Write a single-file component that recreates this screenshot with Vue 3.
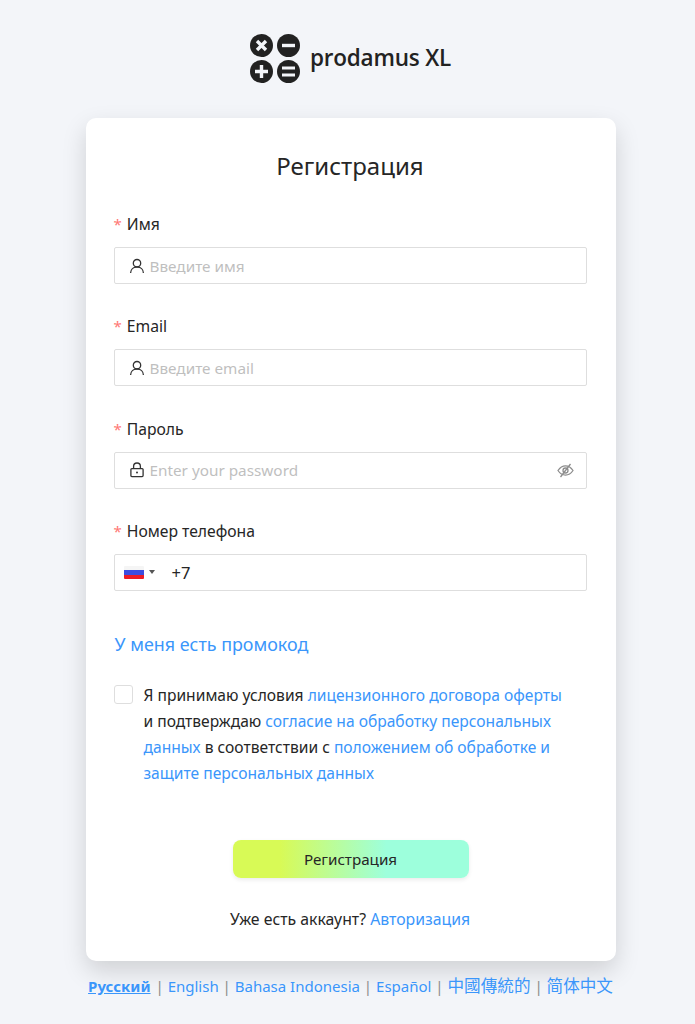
<template>
  <div class="page">
    <div class="logo">
      <svg class="logo-mark" width="50" height="50" viewBox="0 0 50 50">
        <circle cx="11.5" cy="12.500" r="11.5" fill="#222" />
        <circle cx="38.5" cy="12.500" r="11.5" fill="#222" />
        <circle cx="11.5" cy="38.5" r="11.5" fill="#222" />
        <circle cx="38.5" cy="38.5" r="11.5" fill="#222" />
        <path d="M7 8l9 9M16 8l-9 9" stroke="#f3f5f9" stroke-width="3.4" />
        <path d="M32 12.500h13" stroke="#f3f5f9" stroke-width="3.4" />
        <path d="M5 38.5h13M11.5 32v13" stroke="#f3f5f9" stroke-width="3.4" />
        <path d="M32 35h13M32 42h13" stroke="#f3f5f9" stroke-width="3.2" />
      </svg>
      <span class="logo-text">prodamus XL</span>
    </div>

    <div class="card">
      <h1>Регистрация</h1>

      <div v-for="field in fields" :key="field.label" class="field">
        <label><span class="req">*</span>{{ field.label }}</label>
        <div class="input">
          <svg v-if="field.icon === 'user'" class="prefix" width="16" height="16" viewBox="0 0 16 16" fill="none" stroke="#333" stroke-width="1.3">
            <circle cx="8" cy="5.2" r="3.7" />
            <path d="M1.6 15c0-3.6 2.8-6 6.4-6s6.4 2.4 6.4 6" />
          </svg>
          <svg v-else class="prefix" width="16" height="16" viewBox="0 0 16 16" fill="none" stroke="#333" stroke-width="1.3">
            <rect x="1.9" y="6.6" width="12.2" height="8" rx="1" />
            <path d="M4.6 6.6V4.4a3.4 3.4 0 0 1 6.8 0v2.2" />
            <circle cx="8" cy="10.6" r="1" fill="#333" stroke="none" />
          </svg>
          <span class="placeholder">{{ field.placeholder }}</span>
          <svg v-if="field.icon === 'lock'" class="eye" width="17" height="17" viewBox="0 0 17 17" fill="none" stroke="#8c8c8c" stroke-width="1.3">
            <path d="M1 8.5c2-3 4.4-4.6 7.5-4.6S14 5.500 16 8.500c-2 3-4.400 4.600-7.500 4.600S3 11.500 1 8.500z" />
            <circle cx="8.500" cy="8.500" r="2.500" />
            <path d="M13.500 2L3.500 15" />
          </svg>
        </div>
      </div>

      <div class="field phone-field">
        <label><span class="req">*</span>Номер телефона</label>
        <div class="input phone">
          <span class="flag"></span>
          <span class="caret"></span>
          <span class="phone-value">+7</span>
        </div>
      </div>

      <a class="promo">У меня есть промокод</a>

      <div class="agree">
        <span class="checkbox"></span>
        <p>
          Я принимаю условия <a>лицензионного договора оферты</a> и подтверждаю
          <a>согласие на обработку персональных данных</a> в соответствии с
          <a>положением об обработке и защите персональных данных</a>
        </p>
      </div>

      <button class="submit">Регистрация</button>

      <div class="login">Уже есть аккаунт? <a>Авторизация</a></div>
    </div>

    <div class="langs">
      <template v-for="(lang, i) in langs" :key="lang.name">
        <span v-if="i > 0" class="sep"> | </span>
        <a :class="{ active: i === 0, cjk: lang.cjk }">{{ lang.name }}</a>
      </template>
    </div>
  </div>
</template>

<script setup>
const fields = [
  { label: 'Имя', placeholder: 'Введите имя', icon: 'user' },
  { label: 'Email', placeholder: 'Введите email', icon: 'user' },
  { label: 'Пароль', placeholder: 'Enter your password', icon: 'lock' }
]

const langs = [
  { name: 'Русский' },
  { name: 'English' },
  { name: 'Bahasa Indonesia' },
  { name: 'Español' },
  { name: '中國傳統的', cjk: true },
  { name: '简体中文', cjk: true }
]
</script>

<style>
html,
body {
  margin: 0;
  background: #f3f5f9;
}
</style>

<style scoped>
.page {
  display: flex;
  flex-direction: column;
  align-items: center;
  height: 1024px;
  overflow: hidden;
  padding-top: 33px;
  padding-left: 6px;
  box-sizing: border-box;
  background: #f3f5f9;
  font-family: "Noto Sans", "Noto Sans CJK SC", sans-serif;
  color: #262626;
}

.logo {
  display: flex;
  align-items: center;
  gap: 10px;
  height: 50px;
  margin-bottom: 35px;
}

.logo-text {
  font-family: "Open Sans", sans-serif;
  font-size: 22.500px;
  font-weight: 600;
  color: #222;
  letter-spacing: -0.2px;
  margin-top: -2px;
}

.card {
  width: 530px;
  height: 843px;
  box-sizing: border-box;
  padding: 28px 29px 0 28px;
  background: #fff;
  border-radius: 10px;
  box-shadow: 0 10px 24px rgba(0, 0, 0, 0.15);
}

h1 {
  margin: 0 0 27px;
  height: 40px;
  line-height: 40px;
  font-size: 24px;
  font-weight: 400;
  text-align: center;
}

.field {
  margin-bottom: 31.330px;
}

label {
  display: block;
  height: 22px;
  line-height: 22px;
  margin-bottom: 12px;
  font-size: 15.700px;
}

.req {
  color: #ff7875;
  margin-right: 5px;
  font-size: 15px;
}

.input {
  display: flex;
  align-items: center;
  height: 37px;
  box-sizing: border-box;
  padding: 0 12px 0 14px;
  border: 1px solid #dedede;
  border-radius: 2px;
  background: #fff;
}

.prefix {
  margin-right: 5px;
  flex-shrink: 0;
}

.placeholder {
  flex: 1;
  font-size: 15.300px;
  color: #bfbfbf;
}

.phone-field {
  margin-bottom: 40px;
}

.phone {
  padding-left: 9px;
}

.flag {
  width: 20px;
  height: 13px;
  border-radius: 1px;
  background: linear-gradient(#f5f5f5 0 33%, #3d4de0 33% 66%, #ee1c25 66%);
}

.caret {
  width: 0;
  height: 0;
  margin-left: 5px;
  border-left: 3.500px solid transparent;
  border-right: 3.500px solid transparent;
  border-top: 4px solid #555;
}

.phone-value {
  margin-left: 17px;
  font-size: 16.500px;
}

a {
  color: #3a96fb;
  text-decoration: none;
}

.promo {
  display: block;
  height: 26px;
  line-height: 26px;
  margin: 0 0 25px 1px;
  font-size: 17.900px;
}

.agree {
  display: flex;
  gap: 11px;
  height: 104px;
  margin-bottom: 54px;
}

.checkbox {
  flex-shrink: 0;
  width: 17px;
  height: 17px;
  margin-top: 3px;
  border: 1px solid #dedede;
  border-radius: 3px;
}

.agree p {
  margin: 0;
  width: 432px;
  font-size: 15.600px;
  line-height: 26px;
}

.submit {
  display: block;
  width: 236px;
  height: 38px;
  margin: 0 0 0 119px;
  padding: 0;
  border: none;
  border-radius: 8px;
  background: linear-gradient(90deg, #d8fa56 20%, #9dffdc 65%);
  box-shadow: 0 2px 4px rgba(0, 0, 0, 0.08);
  font-family: inherit;
  font-size: 15.200px;
  color: #262626;
}

.login {
  margin-top: 30px;
  text-align: center;
  font-size: 15.800px;
  line-height: 22px;
}

.langs {
  margin-top: 13px;
  font-size: 15px;
  line-height: 24px;
  white-space: pre;
  color: #8c8c8c;
}

.langs .active {
  font-weight: 700;
  text-decoration: underline;
  margin-right: 1px;
}

.langs .cjk {
  font-size: 16.600px;
}
</style>
